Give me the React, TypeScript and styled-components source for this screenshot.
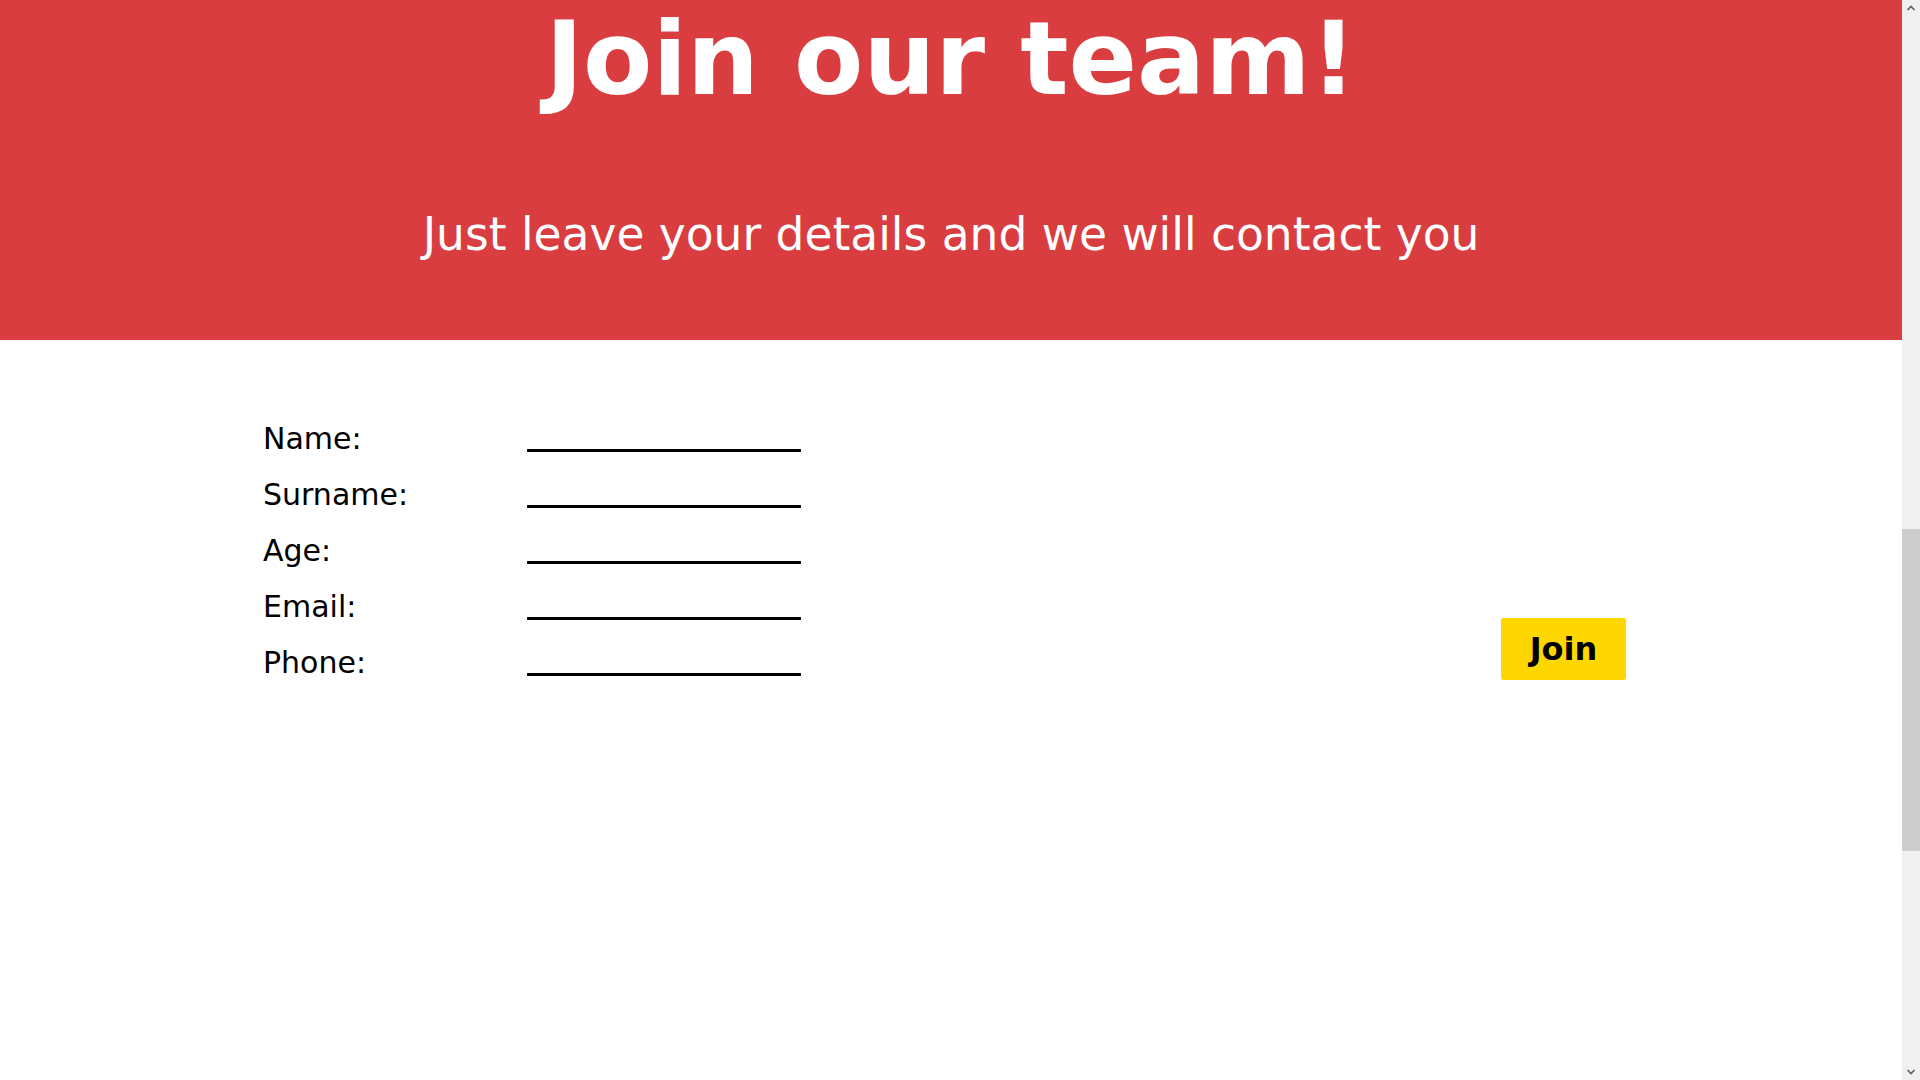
import styled, { createGlobalStyle } from "styled-components";

const fields = ["Name", "Surname", "Age", "Email", "Phone"];

const THUMB_OFFSET = 512;
const THUMB_SIZE = 322;

const Arrow: React.FC<{ down?: boolean }> = ({ down }) => (
  <svg width="18" height="17" viewBox="0 0 18 17">
    <path
      d={down ? "M5.5 7 L9 10.5 L12.5 7" : "M5.5 10 L9 6.5 L12.5 10"}
      fill="none"
      stroke="#5f5f5f"
      strokeWidth="1.6"
    />
  </svg>
);

const App: React.FC = () => {
  return (
    <>
      <GlobalStyle />
      <Page>
        <Banner>
          <Title>Join our team!</Title>
          <Subtitle>Just leave your details and we will contact you</Subtitle>
        </Banner>
        <FormSection>
          <FieldGrid>
            {fields.map((field) => (
              <FieldRow key={field}>
                <Label htmlFor={field.toLowerCase()}>{field}:</Label>
                <LineInput id={field.toLowerCase()} type="text" />
              </FieldRow>
            ))}
          </FieldGrid>
          <JoinButton type="button">Join</JoinButton>
        </FormSection>
      </Page>
      <ScrollRail>
        <ScrollArrow>
          <Arrow />
        </ScrollArrow>
        <ScrollTrack>
          <ScrollThumb $offset={THUMB_OFFSET} $size={THUMB_SIZE} />
        </ScrollTrack>
        <ScrollArrow>
          <Arrow down />
        </ScrollArrow>
      </ScrollRail>
    </>
  );
};

export default App;

const GlobalStyle = createGlobalStyle`
  html, body {
    margin: 0;
    height: 100%;
    overflow: hidden;
    background: #ffffff;
    font-family: "DejaVu Sans", Verdana, sans-serif;
  }
`;

const Page = styled.div`
  width: calc(100% - 18px);
  display: flex;
  flex-direction: column;
`;

const Banner = styled.header`
  background: #d93d3f;
  color: #ffffff;
  height: 340px;
  display: flex;
  flex-direction: column;
  align-items: center;
`;

const Title = styled.h1`
  margin: 0;
  font-size: 101px;
  font-weight: bold;
  line-height: normal;
`;

const Subtitle = styled.p`
  margin: 90px 0 0;
  font-size: 45.5px;
  font-weight: normal;
  line-height: normal;
`;

const FormSection = styled.section`
  display: flex;
  align-items: flex-start;
  justify-content: space-between;
  padding: 81px 276px 0 263px;
`;

const FieldGrid = styled.div`
  display: grid;
  grid-auto-rows: 56px;
`;

const FieldRow = styled.div`
  display: grid;
  grid-template-columns: 264px 274px;
  align-items: start;
`;

const Label = styled.label`
  font-size: 30px;
  line-height: normal;
  color: #000000;
`;

const LineInput = styled.input`
  box-sizing: border-box;
  width: 274px;
  height: 31px;
  margin: 0;
  padding: 0 4px;
  border: none;
  border-bottom: 3px solid #000000;
  background: transparent;
  font-family: inherit;
  font-size: 24px;
  outline: none;
`;

const JoinButton = styled.button`
  margin-top: 197px;
  width: 125px;
  height: 62px;
  padding: 0;
  border: none;
  border-radius: 2px;
  background: #ffd700;
  color: #000000;
  font-family: "DejaVu Sans", Verdana, sans-serif;
  font-size: 32px;
  font-weight: bold;
  cursor: pointer;
`;

// window scrollbar, drawn over the right edge of the viewport
const ScrollRail = styled.div`
  position: fixed;
  top: 0;
  right: 0;
  bottom: 0;
  width: 18px;
  display: flex;
  flex-direction: column;
  background: #f0f0f0;
`;

const ScrollArrow = styled.div`
  height: 17px;
  display: flex;
  align-items: center;
  justify-content: center;
`;

const ScrollTrack = styled.div`
  flex: 1;
  display: flex;
  flex-direction: column;
`;

const ScrollThumb = styled.div<{ $offset: number; $size: number }>`
  margin-top: ${(p) => p.$offset}px;
  height: ${(p) => p.$size}px;
  background: #cdcdcd;
`;
